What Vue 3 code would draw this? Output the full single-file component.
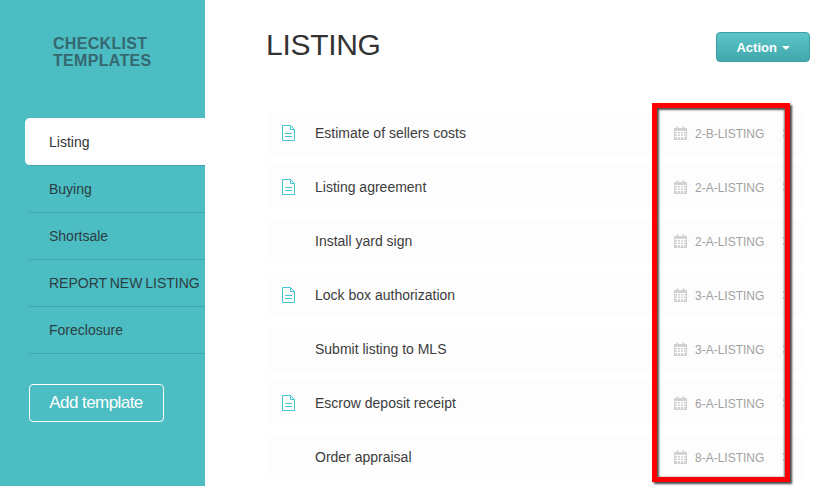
<template>
  <div class="page">
    <aside class="side">
      <h2 class="side-title">CHECKLIST<br />TEMPLATES</h2>
      <nav class="nav">
        <a v-for="t in templates" :key="t" class="nav-item" :class="{ active: t === 'Listing' }">{{ t }}</a>
      </nav>
      <button class="add-btn">Add template</button>
    </aside>

    <main class="main">
      <header class="head">
        <h1>LISTING</h1>
        <button class="action">Action <span class="caret"></span></button>
      </header>

      <ul class="list">
        <li v-for="r in rows" :key="r.name" class="row">
          <span class="doc">
            <svg v-if="r.doc" width="13" height="16" viewBox="0 0 13 16" fill="none" stroke="#45c6d0" stroke-width="1">
              <path d="M0.5 0.5h8l4 4v11h-12z" />
              <path d="M8.500 0.500v4h4" />
              <path d="M3 8.500h7M3 11.500h7" />
            </svg>
          </span>
          <span class="name">{{ r.name }}</span>
          <span class="meta">
            <svg width="13" height="14" viewBox="0 0 13 14">
              <path fill="#d2d2d2" d="M0 2h2.500V0.500h2V2h4V0.500h2V2H13v12H0z" />
              <path stroke="#fff" stroke-width="1" d="M1 5.500h11M1 8h11M1 10.500h11M3.500 5v8M6.500 5v8M9.500 5v8" />
            </svg>
            <span class="code">{{ r.code }}</span>
          </span>
          <span class="handle"></span>
        </li>
      </ul>
    </main>

    <div class="mark"></div>
  </div>
</template>

<script setup>
const templates = ['Listing', 'Buying', 'Shortsale', 'REPORT NEW LISTING', 'Foreclosure']

const rows = [
  { name: 'Estimate of sellers costs', code: '2-B-LISTING', doc: true },
  { name: 'Listing agreement', code: '2-A-LISTING', doc: true },
  { name: 'Install yard sign', code: '2-A-LISTING', doc: false },
  { name: 'Lock box authorization', code: '3-A-LISTING', doc: true },
  { name: 'Submit listing to MLS', code: '3-A-LISTING', doc: false },
  { name: 'Escrow deposit receipt', code: '6-A-LISTING', doc: true },
  { name: 'Order appraisal', code: '8-A-LISTING', doc: false },
]
</script>

<style>
html, body { margin: 0; overflow: hidden; background: #fff; }
</style>

<style scoped>
.page {
  position: relative;
  display: flex;
  width: 826px;
  height: 486px;
  overflow: hidden;
  font-family: "Liberation Sans", Arial, sans-serif;
  color: #333;
}
.side {
  width: 205px;
  flex: none;
  background: #4bbdc3;
  padding-top: 35px;
  box-sizing: border-box;
}
.side-title {
  margin: 0 0 0 53px;
  font-size: 16px;
  line-height: 17px;
  font-weight: bold;
  letter-spacing: 0.3px;
  color: #36686f;
}
.nav {
  display: flex;
  flex-direction: column;
  margin: 49px 0 0 29px;
}
.nav-item {
  height: 47px;
  box-sizing: border-box;
  padding-left: 20px;
  line-height: 46px;
  font-size: 14px;
  word-spacing: -1px;
  color: #2d3e42;
  border-bottom: 1px solid #40a5ab;
}
.nav-item.active {
  height: 48px;
  padding-top: 1px;
  margin-left: -4px;
  padding-left: 24px;
  background: #fff;
  color: #333;
  border-radius: 5px 0 0 5px;
}
.add-btn {
  display: block;
  width: 135px;
  height: 38px;
  margin: 30px 0 0 29px;
  padding: 0 1px 0 0;
  background: transparent;
  border: 1px solid #fff;
  border-radius: 4px;
  color: #fff;
  font-family: inherit;
  font-size: 17px;
  letter-spacing: -0.55px;
}
.main {
  flex: 1;
  padding-left: 61px;
  padding-right: 16px;
  min-width: 0;
}
.head {
  display: flex;
  justify-content: space-between;
  align-items: flex-start;
  height: 111px;
}
.head h1 {
  margin: 27px 0 0;
  font-size: 30px;
  line-height: 36px;
  letter-spacing: -0.3px;
  font-weight: normal;
  color: #333;
}
.action {
  margin-top: 32px;
  width: 94px;
  height: 30px;
  padding: 0;
  background: linear-gradient(#5cc6ca, #41a7ac);
  border: 1px solid #3c9ea3;
  border-radius: 4px;
  color: #fff;
  font-family: inherit;
  font-size: 13px;
  font-weight: bold;
}
.caret {
  display: inline-block;
  vertical-align: middle;
  margin-left: 1px;
  border-top: 4px solid #fff;
  border-left: 4px solid transparent;
  border-right: 4px solid transparent;
}
.list {
  list-style: none;
  margin: 0 5px 0 0;
  padding: 0;
}
.row {
  display: flex;
  align-items: center;
  height: 44px;
  margin-bottom: 10px;
  background: #fdfdfd;
  font-size: 14px;
  color: #3c3c3c;
}
.doc {
  width: 49px;
  flex: none;
  padding-left: 16px;
  box-sizing: border-box;
  display: flex;
}
.name { flex: 1; }
.meta {
  display: flex;
  align-items: center;
  gap: 8px;
  width: 109px;
  flex: none;
  color: #a2a2a2;
  font-size: 12px;
}
.code { padding-top: 1px; }
.handle {
  flex: none;
  width: 7px;
  height: 4px;
  margin-right: 15px;
  border-top: 2px solid #ccc;
  border-bottom: 2px solid #ccc;
}
.mark {
  position: absolute;
  left: 652px;
  top: 103px;
  width: 138px;
  height: 379px;
  box-sizing: border-box;
  border: 5px solid #f00;
  box-shadow: 2px 2px 2px #444, inset 2px 2px 2px #555, inset -1px 0 2px #777;
}
</style>
